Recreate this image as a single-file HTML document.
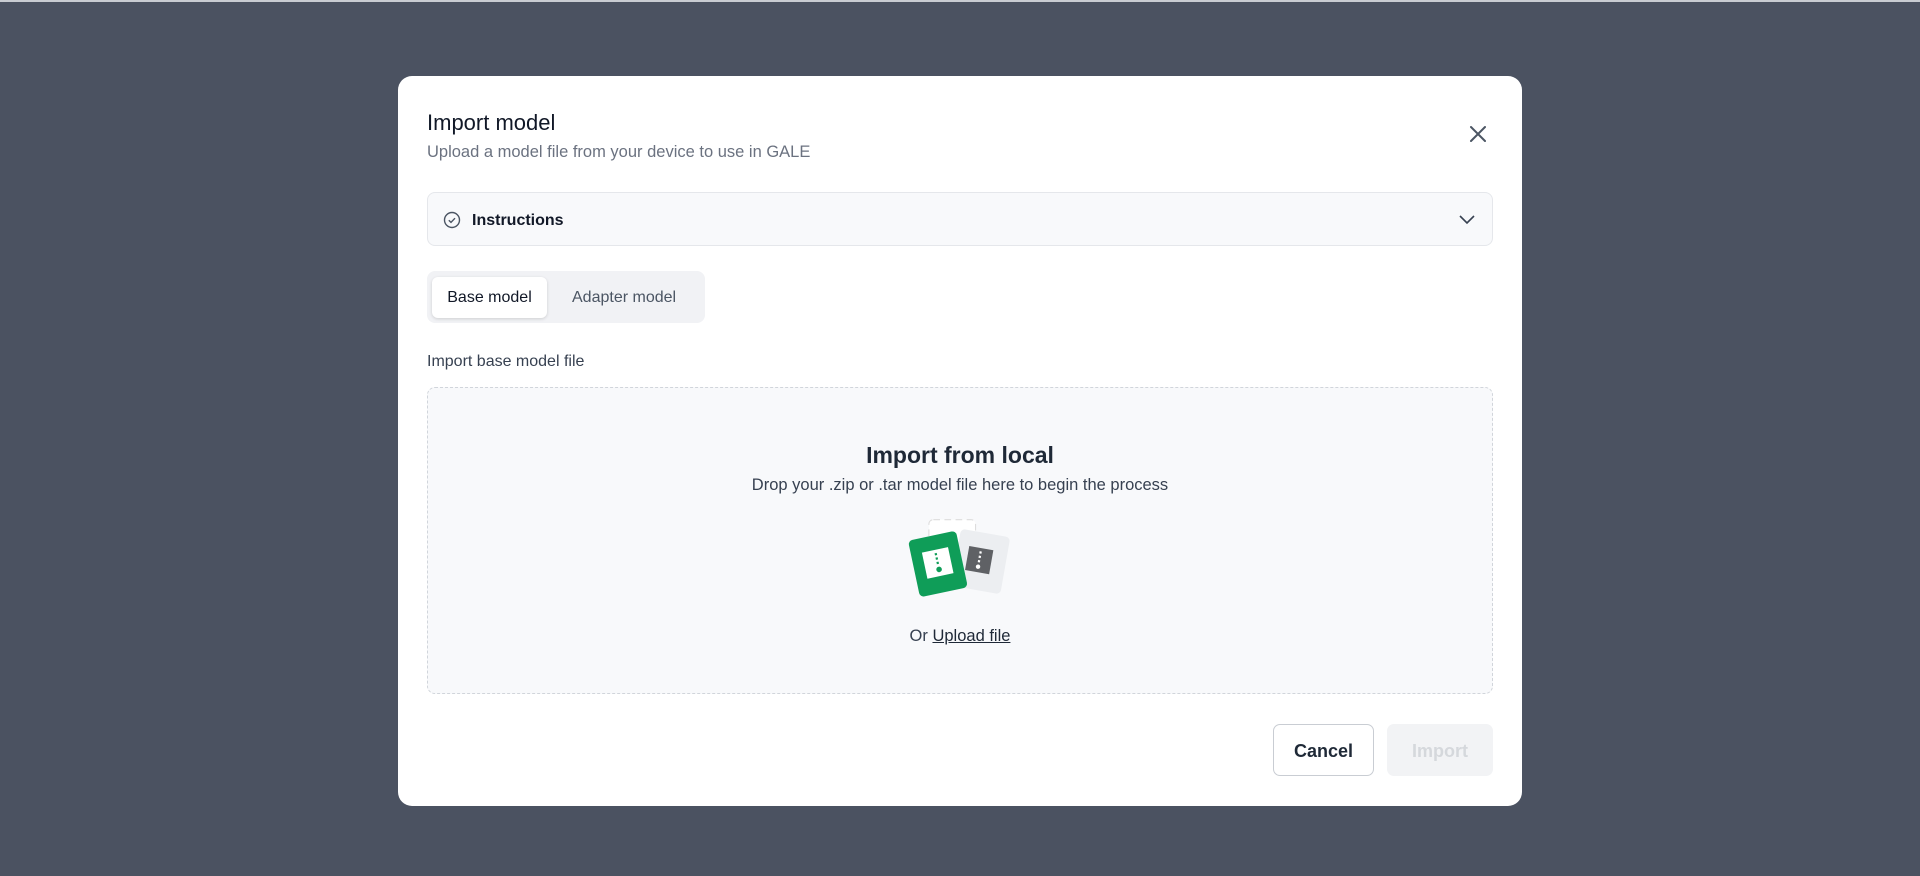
<!DOCTYPE html>
<html><head><meta charset="utf-8"><style>
*{box-sizing:border-box;margin:0;padding:0}
body{width:1920px;height:876px;overflow:hidden;background:#4b5261;font-family:"Liberation Sans",sans-serif;position:relative}
.top{position:absolute;left:0;top:0;width:1920px;height:2px;background:#c9ccd2}
.m{position:absolute;left:398px;top:76px;width:1124px;height:730px;background:#fff;border-radius:14px}
.a{position:absolute}
</style></head><body>
<div class="top"></div>
<div class="m">
 <div class="a" style="left:29px;top:34px;font-size:22px;color:#111827">Import model</div>
 <div class="a" style="left:29px;top:67px;font-size:16.5px;color:#6b7280">Upload a model file from your device to use in GALE</div>
 <svg class="a" style="left:1070px;top:48px" width="20" height="20" viewBox="0 0 20 20"><path d="M3 3L17 17M17 3L3 17" stroke="#4b5563" stroke-width="2" fill="none" stroke-linecap="round"/></svg>
 <div class="a" style="left:29px;top:116px;width:1066px;height:54px;background:#f8f9fb;border:1px solid #e5e7eb;border-radius:8px">
  <svg class="a" style="left:15px;top:18px" width="18" height="18" viewBox="0 0 18 18"><circle cx="9" cy="9" r="7.5" stroke="#4b5563" stroke-width="1.4" fill="none"/><path d="M5.8 9.2l2.2 2.2 4-4.2" stroke="#4b5563" stroke-width="1.4" fill="none"/></svg>
  <div class="a" style="left:44px;top:19px;font-size:16px;font-weight:bold;color:#111827">Instructions</div>
  <svg class="a" style="left:1030px;top:20px" width="18" height="14" viewBox="0 0 18 14"><path d="M2 3l7 7 7-7" stroke="#374151" stroke-width="1.6" fill="none"/></svg>
 </div>
 <div class="a" style="left:29px;top:195px;width:278px;height:52px;background:#f1f2f5;border-radius:8px">
  <div class="a" style="left:5px;top:6px;width:115px;height:41px;background:#fff;border-radius:6px;box-shadow:0 1px 3px rgba(0,0,0,.15);font-size:16px;color:#111827;text-align:center;line-height:42px">Base model</div>
  <div class="a" style="left:145px;top:6px;height:41px;font-size:16px;color:#4b5563;line-height:42px">Adapter model</div>
 </div>
 <div class="a" style="left:29px;top:277px;font-size:16px;color:#374151">Import base model file</div>
 <div class="a" style="left:29px;top:311px;width:1066px;height:307px;background:#f8f9fb;border:1px dashed #d1d5db;border-radius:8px">
  <div class="a" style="left:0;width:100%;top:54px;text-align:center;font-size:23px;font-weight:bold;color:#1f2937">Import from local</div>
  <div class="a" style="left:0;width:100%;top:88px;text-align:center;font-size:16.5px;color:#374151">Drop your .zip or .tar model file here to begin the process</div>
  <svg class="a" style="left:470px;top:125px" width="124" height="100" viewBox="0 0 110 90">
   <rect x="27" y="6" width="42" height="60" rx="4" fill="#fff" stroke="#ddd" stroke-dasharray="6 4"/>
   <g transform="rotate(10 75 50)"><rect x="50" y="18" width="45" height="52" rx="4" fill="#eceef1"/><rect x="60" y="32" width="22" height="22" fill="#5f6165"/><path d="M71 35v12" stroke="#fff" stroke-width="2" stroke-dasharray="2 2"/><circle cx="71" cy="49" r="2" fill="#fff"/></g>
   <g transform="rotate(-12 35 50)"><rect x="14" y="20" width="44" height="52" rx="4" fill="#0f9d58"/><rect x="24" y="33" width="24" height="24" fill="#fff"/><path d="M36 36v12" stroke="#0f9d58" stroke-width="2" stroke-dasharray="2 2"/><circle cx="36" cy="51" r="2.5" fill="#0f9d58"/></g>
  </svg>
  <div class="a" style="left:0;width:100%;top:239px;text-align:center;font-size:16.5px;color:#374151">Or <span style="text-decoration:underline;color:#1f2937">Upload file</span></div>
 </div>
 <div class="a" style="left:875px;top:648px;width:101px;height:52px;border:1px solid #c9cdd3;border-radius:7px;font-size:18px;font-weight:bold;color:#1f2937;text-align:center;line-height:52px">Cancel</div>
 <div class="a" style="left:989px;top:648px;width:106px;height:52px;background:#f2f3f5;border-radius:7px;font-size:18px;font-weight:bold;color:#d5d8dc;text-align:center;line-height:54px">Import</div>
</div>
</body></html>
